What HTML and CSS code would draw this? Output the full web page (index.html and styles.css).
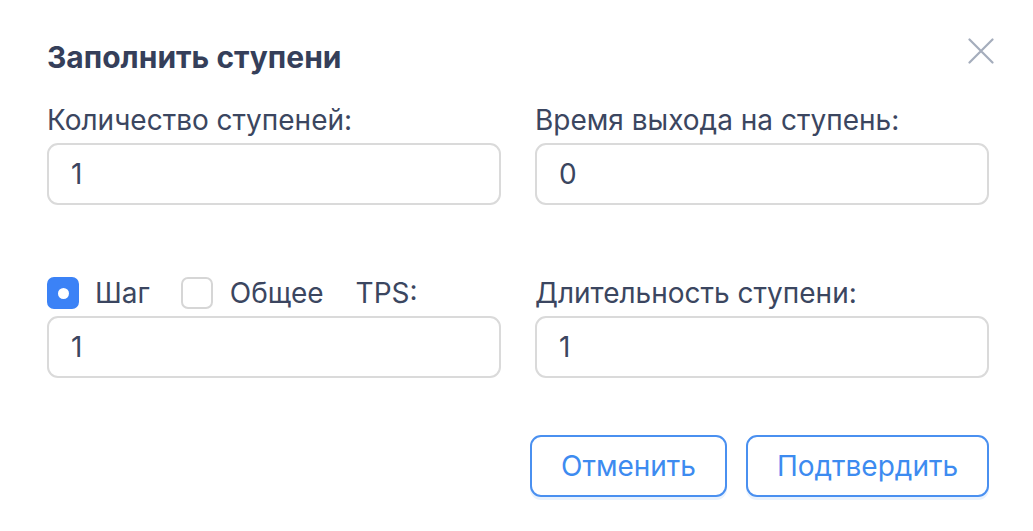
FILE: index.html
```html
<!DOCTYPE html>
<html lang="ru">
<head>
<meta charset="utf-8">
<link rel="stylesheet" href="styles.css">
</head>
<body>
<div class="dialog">
  <div class="header">
    <h1 class="title">Заполнить ступени</h1>
    <button class="close" aria-label="Закрыть">
      <svg width="26" height="26" viewBox="0 0 26 26"><path d="M1.5 1.5 L24.5 24.5 M24.5 1.5 L1.5 24.5" stroke="#a5adbc" stroke-width="2.2" fill="none" stroke-linecap="round"/></svg>
    </button>
  </div>
  <div class="grid">
    <div class="field">
      <div class="label">Количество ступеней:</div>
      <div class="input">1</div>
    </div>
    <div class="field">
      <div class="label">Время выхода на ступень:</div>
      <div class="input">0</div>
    </div>
    <div class="field">
      <div class="label options">
        <span class="box checked"><span class="dot"></span></span>
        <span class="opt">Шаг</span>
        <span class="box"></span>
        <span class="opt general">Общее</span>
        <span class="opt tps">TPS:</span>
      </div>
      <div class="input">1</div>
    </div>
    <div class="field">
      <div class="label">Длительность ступени:</div>
      <div class="input">1</div>
    </div>
  </div>
  <div class="footer">
    <button class="btn cancel">Отменить</button>
    <button class="btn confirm">Подтвердить</button>
  </div>
</div>
</body>
</html>
```
FILE: styles.css
```css
html, body {
  margin: 0;
  padding: 0;
  background: #ffffff;
}
body {
  font-family: "Inter", "Noto Sans", sans-serif;
  color: #3b4660;
}
.dialog {
  width: 1033px;
  height: 531px;
  box-sizing: border-box;
  padding: 37px 44px 0 47px;
}
.header {
  display: flex;
  justify-content: space-between;
  align-items: flex-start;
  height: 65px;
}
.title {
  margin: 0;
  font-size: 30px;
  font-weight: 700;
  line-height: 40px;
  color: #353f5a;
}
.close {
  border: 0;
  background: none;
  padding: 0;
  margin: 1px -5px 0 0;
  width: 26px;
  height: 26px;
  cursor: pointer;
}
.grid {
  display: grid;
  grid-template-columns: 454px 454px;
  column-gap: 34px;
  row-gap: 70px;
}
.field {
  display: flex;
  flex-direction: column;
}
.label {
  font-size: 28px;
  line-height: 36px;
  height: 36px;
  margin-bottom: 5px;
  color: #3b4660;
}
.options {
  display: flex;
  align-items: center;
  margin-bottom: 5px;
}
.box {
  width: 32px;
  height: 32px;
  flex: none;
  box-sizing: border-box;
  border-radius: 7px;
  border: 2px solid #d6d6d6;
  background: #fff;
  display: inline-flex;
  align-items: center;
  justify-content: center;
}
.box.checked {
  background: #3b82f6;
  border-color: #3b82f6;
}
.dot {
  width: 11px;
  height: 11px;
  border-radius: 50%;
  background: #fff;
}
.opt {
  margin: 0 31px 0 16px;
}
.opt.general {
  margin-left: 17px;
}
.opt.tps {
  margin-left: 1px;
}
.input {
  height: 62px;
  box-sizing: border-box;
  border: 2px solid #dadada;
  border-radius: 11px;
  padding: 0 22px;
  display: flex;
  align-items: center;
  font-size: 28px;
  color: #3b4660;
}
.footer {
  display: flex;
  justify-content: flex-end;
  gap: 19px;
  margin-top: 57px;
}
.btn {
  height: 62px;
  box-sizing: border-box;
  border: 2px solid #4a90f0;
  border-radius: 11px;
  background: #fff;
  color: #3d8bf0;
  font-family: "Inter", "Noto Sans", sans-serif;
  font-size: 28px;
  box-shadow: 0 3px 0 #e9f2fd;
  cursor: pointer;
}
.cancel {
  width: 197px;
}
.confirm {
  width: 243px;
}
```
